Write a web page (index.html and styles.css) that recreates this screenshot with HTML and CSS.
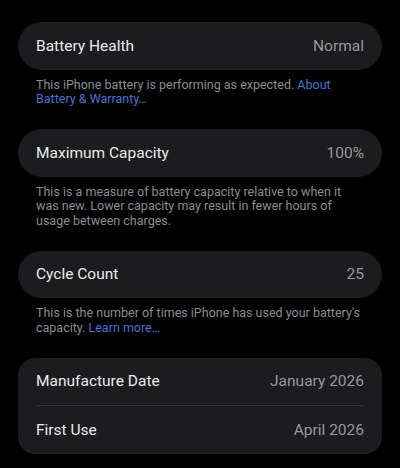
FILE: index.html
```html
<!DOCTYPE html>
<html>
<head>
<meta charset="utf-8">
<link rel="stylesheet" href="styles.css">
</head>
<body>
<main class="page">
  <section class="group">
    <div class="card pill">
      <div class="row"><span class="label">Battery Health</span><span class="value">Normal</span></div>
    </div>
    <p class="footer">This iPhone battery is performing as expected. <span class="link">About Battery &amp; Warranty…</span></p>
  </section>
  <section class="group">
    <div class="card pill">
      <div class="row"><span class="label">Maximum Capacity</span><span class="value">100%</span></div>
    </div>
    <p class="footer">This is a measure of battery capacity relative to when it was new. Lower capacity may result in fewer hours of usage between charges.</p>
  </section>
  <section class="group">
    <div class="card pill">
      <div class="row"><span class="label">Cycle Count</span><span class="value">25</span></div>
    </div>
    <p class="footer">This is the number of times iPhone has used your battery's capacity. <span class="link">Learn more…</span></p>
  </section>
  <section class="group">
    <div class="card rounded">
      <div class="row"><span class="label">Manufacture Date</span><span class="value">January 2026</span></div>
      <div class="divider"></div>
      <div class="row"><span class="label">First Use</span><span class="value">April 2026</span></div>
    </div>
  </section>
</main>
</body>
</html>
```

FILE: styles.css
```css
html, body {
  margin: 0;
  padding: 0;
  background: #000;
}
body {
  width: 400px;
  height: 468px;
  overflow: hidden;
  font-family: Roboto, "Noto Sans", sans-serif;
  -webkit-font-smoothing: antialiased;
}
.page {
  padding: 22px 18px 0;
  display: flex;
  flex-direction: column;
}
.group {
  margin-bottom: 22.5px;
}
.card {
  background: #1c1c1e;
}
.pill {
  border-radius: 24px;
}
.rounded {
  border-radius: 17px;
}
.row {
  height: 47.5px;
  display: flex;
  align-items: center;
  justify-content: space-between;
  padding: 0 18px;
}
.label {
  color: #ebebed;
  font-size: 15.5px;
}
.value {
  color: #98989d;
  font-size: 15.5px;
}
.divider {
  height: 1px;
  background: #333336;
  margin: 0 18px;
}
.footer {
  margin: 0;
  padding: 8px 18px 0;
  color: #8c8c91;
  font-size: 12.5px;
  line-height: 14.5px;
  letter-spacing: 0;
}
.link {
  color: #4a72d4;
}
```
